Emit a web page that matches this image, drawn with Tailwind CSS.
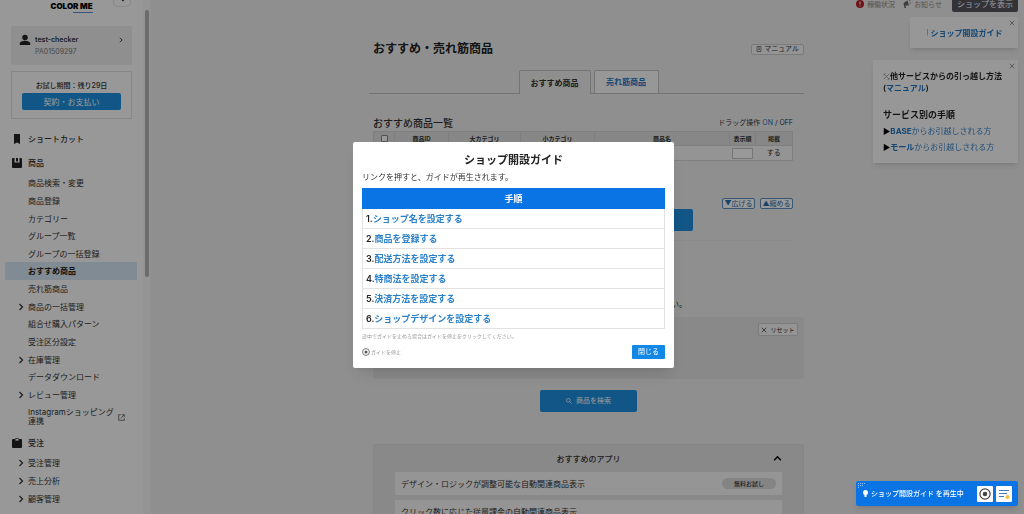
<!DOCTYPE html>
<html lang="ja">
<head>
<meta charset="utf-8">
<title>おすすめ・売れ筋商品</title>
<script src="https://cdn.jsdelivr.net/npm/@tailwindcss/browser@4"></script>
</head>
<body class="h-screen overflow-hidden bg-[#efefef] font-['Inter','Noto_Sans_CJK_JP',sans-serif] text-[8px] leading-3 text-[#333]">
<svg class="hidden">
  <symbol id="chev" viewBox="0 0 8 8"><path d="M2.5 1 5.5 4l-3 3" fill="none" stroke="currentColor" stroke-width="1.2"/></symbol>
  <symbol id="cross" viewBox="0 0 8 8"><path d="M1 1l6 6M7 1 1 7" fill="none" stroke="currentColor"/></symbol>
  <symbol id="stop" viewBox="0 0 16 16"><circle cx="8" cy="8" r="6.8" fill="none" stroke="currentColor" stroke-width="1.6"/><circle cx="8" cy="8" r="3" fill="currentColor"/></symbol>
</svg>

<div class="flex h-full">
  <aside class="flex w-[151px] shrink-0 overflow-hidden border-r border-[#f4f4f4] bg-[#fdfdfd]">
    <div class="min-w-0 flex-1">
      <div class="relative flex h-[26px] items-start justify-center">
        <div class="text-center">
          <div class="text-[8px] leading-3 font-black text-black">COLOR ME</div>
          <div class="ml-auto h-px w-5 bg-[#5b8fd0]"></div>
        </div>
        <button aria-label="メニューを閉じる" class="absolute right-3 -top-2 flex h-[15px] w-[18px] items-end justify-center rounded-sm border border-[#e4e4e4] pb-1 text-black"><svg class="size-2 rotate-180"><use href="#chev"/></svg></button>
      </div>
      <a href="#" class="mx-[11px] flex h-[39px] items-start gap-1 rounded-xs bg-[#efefef] px-2 pt-2">
        <svg class="size-3 text-[#222]" viewBox="0 0 24 24" fill="currentColor"><circle cx="12" cy="7" r="5.5"/><path d="M1.500 22v-3c0-4 7-5.500 10.500-5.500S22.500 15 22.500 19v3z"/></svg>
        <span class="flex-1"><b class="block text-[7px] font-semibold">test-checker</b><span class="block text-[7px] text-[#777]">PA01509297</span></span>
        <svg class="mt-[3px] size-[6px]"><use href="#chev"/></svg>
      </a>
      <div class="mx-[11px] mt-[6px] h-12 border border-[#e2e2e2] px-[10px] pt-2 text-center">
        <div class="text-[7px] font-medium">お試し期間：残り29日</div>
        <button class="mt-px h-[17px] w-full rounded-xs bg-[#1d8fe0] text-white">契約・お支払い</button>
      </div>
      <nav class="pt-[11px]">
        <a href="#" class="flex h-[17px] items-center gap-[6px] pl-3 font-medium"><svg class="size-[10px]" viewBox="0 0 10 10" fill="#222"><path d="M2 0h6v10L5 8.500 2 10z"/></svg>ショートカット</a>
        <a href="#" class="mt-[7px] flex h-[17px] items-center gap-[6px] pl-3 font-medium"><svg class="size-[10px]" viewBox="0 0 10 10"><path fill="#222" d="M0 1q0-1 1-1h8q1 0 1 1v8q0 1-1 1H1q-1 0-1-1z"/><path fill="#fff" d="M2.500 0h1.500v4H2.500zM6 0h1.500v4H6zM2.500 3.500h5v1h-5z"/></svg>商品</a>
        <div class="mt-[3px] mr-[6px] ml-[5px]">
          <a href="#" class="flex h-[18px] items-center pl-[23px]">商品検索・変更</a>
          <a href="#" class="flex h-[18px] items-center pl-[23px]">商品登録</a>
          <a href="#" class="flex h-[17px] items-center pl-[23px]">カテゴリー</a>
          <a href="#" class="flex h-[18px] items-center pl-[23px]">グループ一覧</a>
          <a href="#" class="flex h-[17px] items-center pl-[23px]">グループの一括登録</a>
          <a href="#" class="flex h-[18px] items-center bg-[#d6e8f7] pl-[23px] font-bold text-[#222]">おすすめ商品</a>
          <a href="#" class="flex h-[18px] items-center pl-[23px]">売れ筋商品</a>
          <a href="#" class="flex h-[17px] items-center gap-[3px] pl-3"><svg class="size-2"><use href="#chev"/></svg>商品の一括管理</a>
          <a href="#" class="flex h-[18px] items-center pl-[23px]">組合せ購入パターン</a>
          <a href="#" class="flex h-[18px] items-center pl-[23px]">受注区分設定</a>
          <a href="#" class="flex h-[17px] items-center gap-[3px] pl-3"><svg class="size-2"><use href="#chev"/></svg>在庫管理</a>
          <a href="#" class="flex h-[18px] items-center pl-[23px]">データダウンロード</a>
          <a href="#" class="flex h-[17px] items-center gap-[3px] pl-3"><svg class="size-2"><use href="#chev"/></svg>レビュー管理</a>
          <a href="#" class="flex h-7 items-center justify-between pr-3 pl-[23px] leading-[9px]"><span>Instagramショッピング<br>連携</span><svg class="size-[7px] shrink-0" viewBox="0 0 10 10" fill="none" stroke="#444"><path d="M4 1H1v8h8V6M5.500 1H9v3.500M9 1 4 6"/></svg></a>
        </div>
        <a href="#" class="mt-[3px] flex h-[17px] items-center gap-[6px] pl-3 font-medium"><svg class="size-[10px]" viewBox="0 0 10 10"><rect y="1" width="10" height="9" rx="1" fill="#222"/><path d="M3 3V1q2-1.500 4 0v2z" fill="#fff" stroke="#222" stroke-width=".8"/></svg>受注</a>
        <div class="mt-[3px] ml-[5px]">
          <a href="#" class="flex h-[18px] items-center gap-[3px] pl-3"><svg class="size-2"><use href="#chev"/></svg>受注管理</a>
          <a href="#" class="flex h-[18px] items-center gap-[3px] pl-3"><svg class="size-2"><use href="#chev"/></svg>売上分析</a>
          <a href="#" class="flex h-[17px] items-center gap-[3px] pl-3"><svg class="size-2"><use href="#chev"/></svg>顧客管理</a>
          <a href="#" class="mt-[2px] flex h-[18px] items-center pl-[23px]">定期コース</a>
        </div>
      </nav>
    </div>
    <div class="w-[7px] bg-[#f7f7f7] pt-[10px] pl-[2px]"><div class="h-[267px] w-1 rounded-full bg-[#b4b4b4]"></div></div>
  </aside>

  <main class="min-w-0 flex-1 overflow-hidden">
    <header class="flex h-3 items-start justify-end gap-2 pr-[6px] text-[7px] leading-[9px] text-[#888]">
      <a href="#" class="flex gap-[3px]"><svg class="size-2" viewBox="0 0 8 8"><circle cx="4" cy="4" r="4" fill="#b8202c"/><path d="M4 1.500v3M4 5.500v1" stroke="#fff"/></svg>稼働状況</a>
      <a href="#" class="mr-[2px] flex gap-[3px]"><svg class="size-2" viewBox="0 0 8 8" fill="#666"><path d="M.5 3 4.500.5 6 5.500 2.500 5.500 3 8H1.500z"/><path d="M6 1 7.500 0M6.500 3H8" stroke="#666" stroke-width=".7"/></svg>お知らせ</a>
      <button class="h-3 w-[66px] rounded-b-xs bg-[#56565c] pb-[3px] text-[8px] leading-[9px] text-white">ショップを表示</button>
    </header>
    <div class="pl-[2px]">
    <div class="mx-auto w-full max-w-[431px]">
      <div class="mt-7 flex h-[18px] items-center justify-between">
        <h1 class="text-[12px] font-bold text-[#222]">おすすめ・売れ筋商品</h1>
        <a href="#" class="flex h-[11px] items-center gap-[2px] rounded-xs border border-[#ccc] bg-[#f7f7f7] px-1 text-[7px]"><svg class="size-[6px]" viewBox="0 0 6 6" fill="none" stroke="#555" stroke-width=".7"><path d="M1 .5h4v5H1zM2 2h2M2 3.500h2"/></svg>マニュアル</a>
      </div>
      <div class="-ml-1 mt-3 flex h-6 items-end justify-center gap-[3px] border-b border-[#c2c2c2] pl-1 font-semibold">
        <a href="#" class="-mb-px flex h-6 w-[72px] items-center justify-center rounded-t-xs border border-b-0 border-[#c2c2c2] bg-[#efefef]">おすすめ商品</a>
        <a href="#" class="flex h-[23px] w-[65px] items-center justify-center rounded-t-xs border border-b-0 border-[#c2c2c2] bg-[#fcfcfc] text-[#2277c4]">売れ筋商品</a>
      </div>
      <div class="mt-[23px] mr-[11px] flex items-center justify-between pb-[2px]">
        <h2 class="text-[10px] font-medium">おすすめ商品一覧</h2>
        <div class="text-[7px]">ドラッグ操作 <a href="#" class="text-[#2277c4]">ON</a> / OFF</div>
      </div>
      <div class="mr-[11px]">
        <table class="w-full table-fixed border-collapse text-center text-[6px] leading-[8px]">
          <colgroup><col class="w-[21px]"><col class="w-[54px]"><col class="w-[72px]"><col class="w-[74px]"><col><col class="w-[26px]"><col class="w-[37px]"></colgroup>
          <thead><tr class="h-[14px] bg-[#e2e2e2]">
            <th class="border border-[#d4d4d4]"><input type="checkbox" aria-label="すべて選択" class="mx-auto block size-[7px] appearance-none rounded-[1px] border border-[#888] bg-white"></th>
            <th class="border border-[#d4d4d4]">商品ID</th><th class="border border-[#d4d4d4]">大カテゴリ</th><th class="border border-[#d4d4d4]">小カテゴリ</th><th class="border border-[#d4d4d4]">商品名</th><th class="border border-[#d4d4d4]">表示順</th><th class="border border-[#d4d4d4]">掲載</th>
          </tr></thead>
          <tbody><tr class="h-[15px] border border-[#d4d4d4] bg-[#f7f7f7]">
            <td></td><td></td><td></td><td></td><td></td>
            <td><input type="text" aria-label="表示順" class="mx-auto block h-[11px] w-[21px] border border-[#c4c4c4] bg-white"></td><td class="text-[7px]">する</td>
          </tr></tbody>
        </table>
      </div>
      <div class="mt-[37px] mr-[11px] flex h-[11px] justify-end gap-[5px] text-[7px] leading-[9px] text-[#2b6fae]">
        <button class="w-[33px] rounded-xs border border-[#5b8fc0] bg-white">▼広げる</button>
        <button class="w-[33px] rounded-xs border border-[#5b8fc0] bg-white">▲縮める</button>
      </div>
      <div class="mr-[11px] flex h-[32px] justify-center border-b border-[#e6e6e6]"><button aria-label="変更を保存" class="h-[22px] w-[220px] rounded-xs bg-[#1d8fe0]"></button></div>
      <p class="mt-[57px] mr-[117px] text-right">条件を指定してください。</p>
      <div class="mt-[7px] flex h-[62px] items-start justify-end bg-[#e4e4e4] p-[6px]">
        <button class="flex h-[13px] w-10 items-center justify-center gap-[3px] rounded-xs border border-[#cfcfcf] bg-[#f7f7f7] text-[6px]"><svg class="size-[6px]"><use href="#cross"/></svg>リセット</button>
      </div>
      <button class="mx-auto mt-[11px] flex h-[22px] w-[97px] items-center justify-center gap-1 rounded-xs bg-[#1d8fe0] text-[7px] text-white"><svg class="size-[6px]" viewBox="0 0 8 8" fill="none" stroke="#fff"><circle cx="3" cy="3" r="2.500"/><path d="M5 5l2.500 2.500"/></svg>商品を検索</button>
      <section class="mt-8 h-24 rounded-t-xs border border-b-0 border-[#dedede] bg-[#e4e4e4] px-[21px]">
        <div class="relative flex h-[27px] items-center justify-center"><h2 class="font-medium">おすすめのアプリ</h2><button aria-label="閉じる" class="absolute right-0 text-black"><svg class="size-[9px] -rotate-90"><use href="#chev"/></svg></button></div>
        <div class="flex h-[23px] items-center justify-between bg-[#f9f9f9] px-[6px]"><a href="#">デザイン・ロジックが調整可能な自動関連商品表示</a><span class="h-[11px] w-[54px] rounded-full bg-[#dcdcdc] text-center text-[6px] leading-[11px] font-medium">無料お試し</span></div>
        <div class="mt-[5px] flex h-[23px] items-center bg-[#f9f9f9] px-[6px]"><a href="#">クリック数に応じた従量課金の自動関連商品表示</a></div>
      </section>
    </div>
    </div>
  </main>
</div>

<div class="fixed top-[17px] right-[6px] flex flex-col items-end gap-3">
  <section class="relative flex h-[31px] w-[108px] items-center justify-center bg-[#fcfcfc] pt-px shadow-md">
    <button aria-label="閉じる" class="absolute top-[3px] right-[3px] text-[#777]"><svg class="size-[6px]"><use href="#cross"/></svg></button>
    <a href="#" class="flex items-center gap-[2px] font-semibold text-[#2277c4]"><svg class="h-2 w-[3px]" viewBox="0 0 3 8"><path fill="#e9b04b" d="M1 0h1v5L1 8z"/></svg>ショップ開設ガイド</a>
  </section>
  <section class="relative h-[103px] w-[145px] bg-[#fcfcfc] px-[10px] pt-[10px] shadow-md">
    <button aria-label="閉じる" class="absolute top-[3px] right-[3px] text-[#777]"><svg class="size-[6px]"><use href="#cross"/></svg></button>
    <p class="flex items-center font-semibold whitespace-nowrap text-[#222]"><svg class="size-[7px]" viewBox="0 0 8 8" fill="none" stroke="#888" stroke-width=".8"><path d="M1 1l6 6M7 1 1 7M0 3l3-3M5 8l3-2"/></svg>他サービスからの引っ越し方法</p>
    <p class="font-semibold text-[#222]">(<a href="#" class="text-[#2277c4]">マニュアル</a>)</p>
    <h3 class="mt-[15px] text-[9px] font-bold text-[#222]">サービス別の手順</h3>
    <a href="#" class="mt-1 block whitespace-nowrap text-[#3d86c8]"><span class="text-black">▶</span><b class="text-[#2277c4]">BASE</b>からお引越しされる方</a>
    <a href="#" class="mt-1 block whitespace-nowrap text-[#3d86c8]"><span class="text-black">▶</span><b class="text-[#2277c4]">モール</b>からお引越しされる方</a>
  </section>
</div>

<div class="fixed inset-0 flex items-center justify-center bg-black/40 pb-[4px] pl-[3px]">
  <div role="dialog" aria-labelledby="guide-title" class="w-[321px] rounded-xs bg-white px-[9px] pt-[10px] pb-[9px] shadow-lg">
    <h2 id="guide-title" class="text-center text-[11px] leading-4 font-bold text-[#222]">ショップ開設ガイド</h2>
    <p class="mt-[3px]">リンクを押すと、ガイドが再生されます。</p>
    <table class="mt-[5px] w-full border-collapse text-left text-[9px] font-semibold">
      <thead><tr class="h-5 bg-[#0b74e5] text-center text-white"><th class="border border-[#0b74e5]">手順</th></tr></thead>
      <tbody class="text-[#222]">
        <tr class="h-5"><td class="border border-[#e2e2e2] px-[3px]">1.<a href="#" class="text-[#2a80c9]">ショップ名を設定する</a></td></tr>
        <tr class="h-5"><td class="border border-[#e2e2e2] px-[3px]">2.<a href="#" class="text-[#2a80c9]">商品を登録する</a></td></tr>
        <tr class="h-5"><td class="border border-[#e2e2e2] px-[3px]">3.<a href="#" class="text-[#2a80c9]">配送方法を設定する</a></td></tr>
        <tr class="h-5"><td class="border border-[#e2e2e2] px-[3px]">4.<a href="#" class="text-[#2a80c9]">特商法を設定する</a></td></tr>
        <tr class="h-5"><td class="border border-[#e2e2e2] px-[3px]">5.<a href="#" class="text-[#2a80c9]">決済方法を設定する</a></td></tr>
        <tr class="h-5"><td class="border border-[#e2e2e2] px-[3px]">6.<a href="#" class="text-[#2a80c9]">ショップデザインを設定する</a></td></tr>
      </tbody>
    </table>
    <p class="mt-px text-[5px] text-[#999]">途中でガイドを止める場合はガイドを停止をクリックしてください。</p>
    <div class="mt-[3px] flex items-center justify-between">
      <button class="flex items-center gap-px text-[5px] text-[#999]"><svg class="size-2 text-[#555]"><use href="#stop"/></svg>ガイドを停止</button>
      <button class="h-[14px] w-[33px] rounded-[1px] bg-[#1187e6] text-[7px] text-white">閉じる</button>
    </div>
  </div>
</div>

<div class="fixed right-[6px] bottom-2 flex h-[25px] w-[162px] items-center gap-[3px] rounded-xs bg-[#0b74e5] pr-[6px] pl-[7px] text-white shadow-md">
  <svg class="absolute top-[2px] left-[2px] h-[6px] w-[7px]" viewBox="0 0 7 6" fill="#9cc8f8"><path d="M0 0h1v1H0zM2 0h1v1H2zM4 0h1v1H4zM6 0h1v1H6zM0 2h1v1H0zM2 2h1v1H2zM4 2h1v1H4zM0 4h1v1H0z"/></svg>
  <svg class="h-[7px] w-[5px]" viewBox="0 0 5 7" fill="#fff"><circle cx="2.500" cy="2.500" r="2.500"/><path d="M1.500 4h2v3h-2z"/></svg>
  <span class="flex-1 text-[7px] font-medium whitespace-nowrap">ショップ開設ガイド を再生中</span>
  <button aria-label="停止" class="flex size-4 items-center justify-center rounded-[1px] bg-white text-[#444]"><svg class="size-3"><use href="#stop"/></svg></button>
  <button aria-label="一覧" class="flex size-4 items-center justify-center rounded-[1px] bg-white"><svg class="size-3" viewBox="0 0 12 12"><path d="M1 2.500h10M1 5.500h8M1 8.500h5" stroke="#3f7fc0"/><circle cx="9.500" cy="9" r="2" fill="#f0c040"/></svg></button>
</div>
</body>
</html>
